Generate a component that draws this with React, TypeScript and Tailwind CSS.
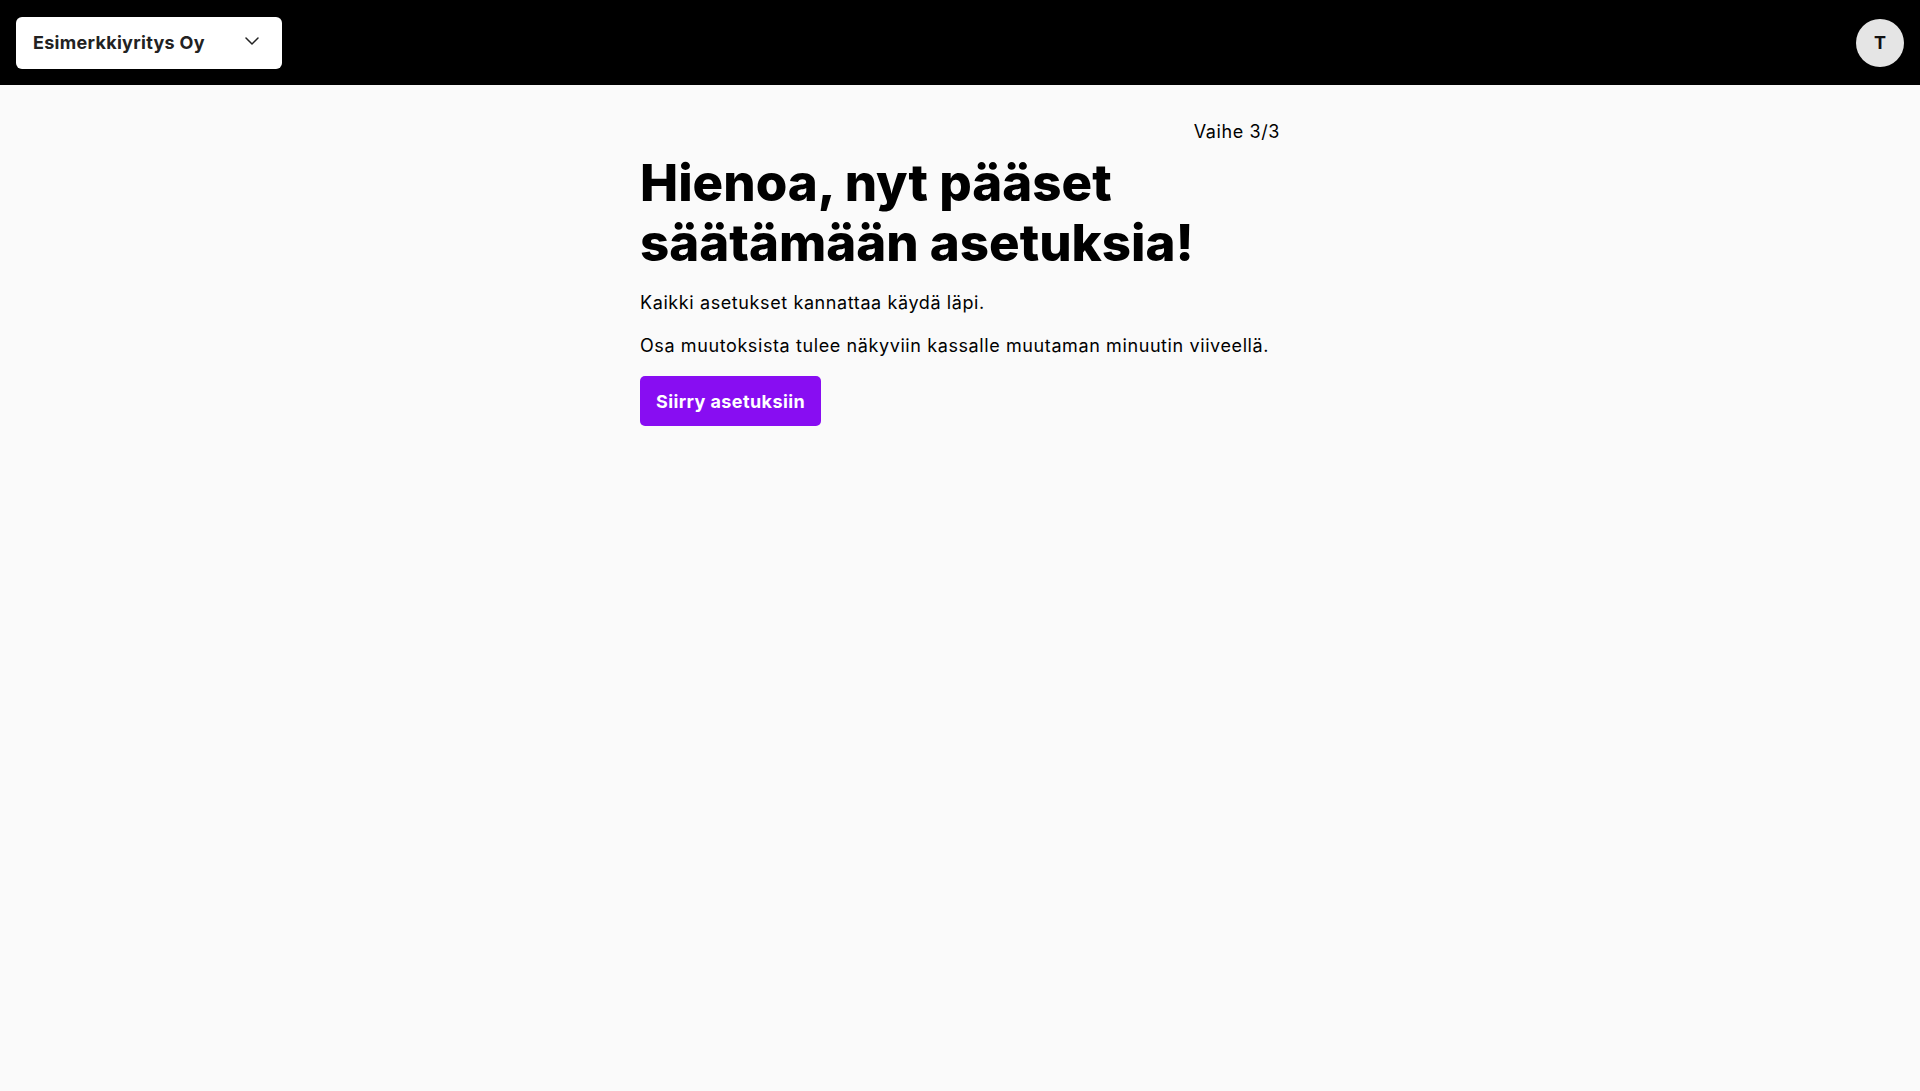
import { ChevronDown } from 'lucide-react';

const font = { fontFamily: 'Inter, "Noto Sans", sans-serif' };

const Header = () => (
  <header className="h-[85px] bg-black flex items-center justify-between px-4">
    <button className="w-[266px] h-[52px] bg-white rounded-md flex items-center justify-between pl-[17px] pr-[18px] text-[18px] font-bold tracking-[0.3px] text-[#222]">
      <span>Esimerkkiyritys Oy</span>
      <ChevronDown size={24} strokeWidth={1.5} className="text-[#222] mb-1" />
    </button>
    <div className="w-12 h-12 rounded-full bg-[#e5e5e5] flex items-center justify-center text-[18px] font-bold text-[#111]">
      T
    </div>
  </header>
);

export default function App() {
  return (
    <div className="min-h-screen bg-[#fafafa] text-black" style={font}>
      <Header />
      <main className="w-[640px] mx-auto pt-[33px]">
        <p className="text-right text-[18px] leading-[28px] tracking-[0.6px]">Vaihe 3/3</p>
        <h1 className="mt-[7px] text-[51px] leading-[60px] font-extrabold">
          Hienoa, nyt pääset säätämään asetuksia!
        </h1>
        <p className="mt-[16px] text-[18px] leading-[28px] tracking-[0.6px]">
          Kaikki asetukset kannattaa käydä läpi.
        </p>
        <p className="mt-[15px] text-[18px] leading-[28px] tracking-[0.6px]">
          Osa muutoksista tulee näkyviin kassalle muutaman minuutin viiveellä.
        </p>
        <button className="mt-[16px] h-[50px] px-4 bg-[#880df2] text-white rounded-[5px] text-[18px] font-bold tracking-[0.4px]">
          Siirry asetuksiin
        </button>
      </main>
    </div>
  );
}
